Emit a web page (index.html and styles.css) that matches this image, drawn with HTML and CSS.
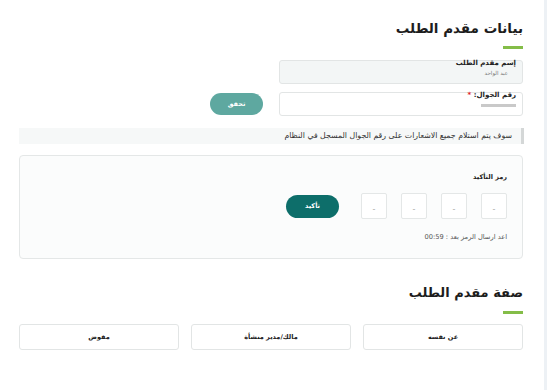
FILE: index.html
```html
<!DOCTYPE html>
<html lang="ar" dir="rtl">
<head>
  <meta charset="UTF-8">
  <meta name="viewport" content="width=device-width, initial-scale=1.0">
  <title>بيانات مقدم الطلب</title>
  <link rel="stylesheet" href="styles.css">
</head>
<body>
  <div class="page">
    <h2 class="section-title">بيانات مقدم الطلب</h2>
    <div class="title-line"></div>

    <div class="field-row">
      <div class="field field-readonly">
        <span class="field-label">إسم مقدم الطلب</span>
        <span class="field-value">عبد الواحد</span>
      </div>
    </div>

    <div class="field-row">
      <div class="field">
        <span class="field-label">رقم الجوال: <span class="req">*</span></span>
        <span class="placeholder-bar"></span>
      </div>
      <button class="btn btn-verify">تحقق</button>
    </div>

    <div class="notice">سوف يتم استلام جميع الاشعارات على رقم الجوال المسجل في النظام</div>

    <div class="otp-card">
      <div class="otp-title">رمز التأكيد</div>
      <div class="otp-row">
        <div class="otp-box">-</div>
        <div class="otp-box">-</div>
        <div class="otp-box">-</div>
        <div class="otp-box">-</div>
        <button class="btn btn-confirm">تأكيد</button>
      </div>
      <div class="otp-timer">اعد ارسال الرمز بعد : 00:59</div>
    </div>

    <h2 class="section-title second">صفة مقدم الطلب</h2>
    <div class="title-line"></div>

    <div class="options">
      <button class="option">عن نفسه</button>
      <button class="option">مالك/مدير منشأة</button>
      <button class="option">مفوض</button>
    </div>
  </div>
</body>
</html>
```

FILE: styles.css
```css
body {
  margin: 0;
  font-family: "DejaVu Sans", "Noto Sans", sans-serif;
  background-color: #ffffff;
  color: #222;
}
.page {
  width: 504px;
  min-height: 390px;
  padding: 17px 21px 0 19px;
  border-right: 3px solid #edf1f5;
}
.section-title {
  margin: 0;
  font-size: 13.5px;
  font-weight: bold;
  line-height: 22px;
  color: #1d1d1d;
}
.section-title.second {
  margin-top: 23px;
  font-size: 13px;
}
.title-line {
  width: 20px;
  height: 3px;
  margin-top: 7px;
  background-color: #84bd48;
}
.field-row {
  display: flex;
  align-items: center;
  gap: 16px;
  margin-top: 11px;
}
.field-row + .field-row {
  margin-top: 8px;
}
.field {
  width: 230px;
  height: 22px;
  border: 1px solid #e2e5e5;
  border-radius: 3px;
  padding: 0 6px;
  display: flex;
  flex-direction: column;
  background-color: #fff;
}
.field-readonly {
  background-color: #f3f6f6;
}
.field-label {
  font-size: 7px;
  font-weight: bold;
  margin-top: -2px;
  color: #222;
}
.req {
  color: #e02020;
}
.field-value {
  font-size: 5.5px;
  color: #777;
  margin-top: 3px;
  margin-right: 8px;
}
.placeholder-bar {
  display: block;
  width: 35px;
  height: 3px;
  margin-top: 5px;
  background-color: #c9c9c9;
}
.btn {
  border: none;
  border-radius: 12px;
  color: #fff;
  font-family: inherit;
  font-size: 6.5px;
  font-weight: bold;
  cursor: pointer;
}
.btn-verify {
  width: 53px;
  height: 22px;
  background-color: #5ea8a0;
}
.notice {
  margin-top: 12px;
  height: 16px;
  line-height: 16px;
  padding-right: 9px;
  margin-right: -1px;
  border-right: 3px solid #d4d7d7;
  background-color: #f6f8f8;
  font-size: 7.8px;
  color: #333;
}
.otp-card {
  margin-top: 11px;
  height: 102px;
  border: 1px solid #e4e7e7;
  border-radius: 4px;
  background-color: #fbfcfc;
  padding: 0 15px;
}
.otp-title {
  margin-top: 17px;
  font-size: 6.5px;
  font-weight: bold;
}
.otp-row {
  display: flex;
  align-items: center;
  gap: 14px;
  margin-top: 12px;
}
.otp-box {
  width: 26px;
  height: 26px;
  border: 1px solid #e4e7e7;
  border-radius: 2px;
  background-color: #fff;
  color: #aaa;
  font-size: 8px;
  display: flex;
  align-items: flex-end;
  justify-content: center;
  padding-bottom: 4px;
  box-sizing: border-box;
}
.btn-confirm {
  width: 53px;
  height: 23px;
  margin-right: 8px;
  background-color: #0d6e6a;
}
.otp-timer {
  margin-top: 14px;
  font-size: 6.7px;
  color: #555;
}
.options {
  display: flex;
  gap: 12px;
  margin-top: 10px;
}
.option {
  flex: 1;
  height: 26px;
  border: 1px solid #e2e5e5;
  border-radius: 3px;
  background-color: #fff;
  font-family: inherit;
  font-size: 6.5px;
  font-weight: bold;
  color: #222;
}
```
